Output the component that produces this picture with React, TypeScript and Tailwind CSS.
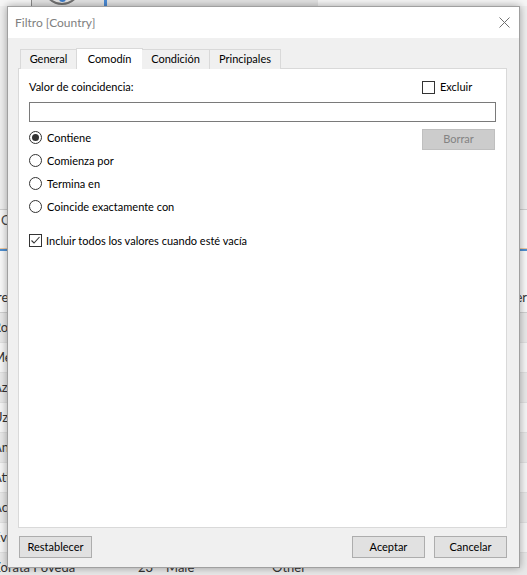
import React from "react";

function Radio({ checked, label }: { checked?: boolean; label: string }) {
  return (
    <div className="flex items-center gap-[5px] h-[13px]">
      <div className="w-[13px] h-[13px] rounded-full border border-[#333333] bg-white flex items-center justify-center">
        {checked && <div className="w-[7px] h-[7px] rounded-full bg-[#333333]" />}
      </div>
      <span className="leading-[13px]">{label}</span>
    </div>
  );
}

function Check({ checked }: { checked?: boolean }) {
  return (
    <div className="w-[13px] h-[13px] border border-[#333333] bg-white flex items-center justify-center">
      {checked && (
        <svg width="11" height="11" viewBox="0 0 11 11">
          <polyline points="1.5,5.5 4,8 9.5,2" fill="none" stroke="#333333" strokeWidth="1.1" />
        </svg>
      )}
    </div>
  );
}

function Btn({ label, disabled }: { label: string; disabled?: boolean }) {
  return (
    <div
      className={
        disabled
          ? "w-[73px] h-[21px] border border-[#bfbfbf] bg-[#cccccc] text-[#838383] flex items-center justify-center"
          : "w-[73px] h-[22px] border border-[#adadad] bg-[#e1e1e1] text-black flex items-center justify-center"
      }
    >
      {label}
    </div>
  );
}

const rows = [
  ["Rosario Ortiz", "31", "Female", "Other"],
  ["Mezquita Pérez", "45", "Male", "Student"],
  ["Azucena Ruiz", "28", "Female", "Other"],
  ["Uzziel Díaz", "52", "Male", "Worker"],
  ["Anabel Martín", "39", "Female", "Other"],
  ["Atilano Prieto", "60", "Male", "Retired"],
  ["Acisclo Nieto", "33", "Male", "Other"],
  ["Evaristo Luna", "41", "Male", "Other"],
  ["Zorata Poveda", "23", "Male", "Other"],
];

export default function App() {
  return (
    <div
      className="relative w-[527px] h-[575px] overflow-hidden bg-[#efefef] text-[11px] text-black"
      style={{ fontFamily: 'Lato, "Noto Sans", sans-serif' }}
    >
      {/* Background application */}
      <div className="flex flex-col">
        <div className="h-[6px] flex bg-[#f6f6f6] overflow-hidden">
          <div className="ml-[31px] w-[287px] h-[6px] border-l border-[#8a8a8a] bg-[#e3e3e3] overflow-hidden">
            <div className="mt-[-34px] h-[40px] flex items-center">
              <div className="ml-[11px] w-[38px] h-[38px] rounded-full border-2 border-[#707070] flex items-end justify-center pb-[1px]">
                <div className="w-[7px] h-[8px] bg-[#3d7cc9] rounded-b-full" />
              </div>
              <div className="ml-[23px] w-[3px] h-[40px] bg-[#4a8ad4]" />
              <span className="ml-[16px] text-[17px] font-semibold leading-[17px] mt-[-26px]">Customers</span>
            </div>
          </div>
        </div>
        <div className="h-[204px] bg-[#efefef] border-b border-[#cfcfcf]" />
        <div className="h-[38px] bg-[#f7f7f7] flex items-start pt-[1px]">
          <span className="ml-[1px] text-[13px] text-[#444]">C</span>
        </div>
        <div className="h-[1px] bg-[#f0c9a0]" />
        <div className="h-[2px] bg-[#4f8fd0]" />
        <div className="h-[32px] bg-[#f9f9f9]" />
        <div className="h-[30px] bg-[#f9f9f9] border-b border-[#d0d0d0] flex items-center text-[13px] text-[#333]">
          <span className="ml-[-38px] w-[182px]">Nombre</span>
          <span className="w-[28px]">Edad</span>
          <span className="w-[106px]">Sexo</span>
          <span className="w-[226px]">Tipo</span>
          <span>Member</span>
        </div>
        {rows.map((r, i) => (
          <div
            key={i}
            className={
              (i % 2 === 0 ? "bg-[#e9e9e9]" : "bg-[#f6f6f6]") +
              " h-[30px] flex items-center text-[13px] text-[#333] border-b border-[#e0e0e0]"
            }
          >
            <span className="ml-[-7px] w-[145px] whitespace-nowrap overflow-hidden">{r[0]}</span>
            <span className="w-[28px]">{r[1]}</span>
            <span className="w-[106px]">{r[2]}</span>
            <span className="w-[230px]">{r[3]}</span>
          </div>
        ))}
      </div>

      {/* Dialog */}
      <div className="absolute left-[7px] top-[6px] w-[513px] h-[562px] border border-[#a0a0a0] bg-[#f0f0f0] shadow-[0_0_8px_rgba(0,0,0,0.35)] flex flex-col">
        <div className="h-[31px] bg-white flex items-center justify-between pl-[7px] pr-[9px]">
          <span className="text-[#808080] text-[12px]">Filtro [Country]</span>
          <svg width="11" height="11" viewBox="0 0 11 11">
            <line x1="0.5" y1="0.5" x2="10.5" y2="10.5" stroke="#6f6f6f" strokeWidth="1" />
            <line x1="10.5" y1="0.5" x2="0.5" y2="10.5" stroke="#6f6f6f" strokeWidth="1" />
          </svg>
        </div>
        <div className="flex-1 flex flex-col pl-[10px] pr-[12px] pt-[10px] pb-[9px]">
          {/* tabs */}
          <div className="flex items-end h-[21px] ml-[2px] relative z-10 -mb-px">
            <div className="w-[57px] h-[20px] border border-b-0 border-[#d9d9d9] bg-[#f0f0f0] flex items-center justify-center">
              General
            </div>
            <div className="w-[67px] h-[21px] border border-b-0 border-[#d9d9d9] bg-white flex items-center justify-center -mx-px">
              Comodín
            </div>
            <div className="w-[68px] h-[20px] border border-b-0 border-l-0 border-[#d9d9d9] bg-[#f0f0f0] flex items-center justify-center">
              Condición
            </div>
            <div className="w-[71px] h-[20px] border border-b-0 border-l-0 border-[#d9d9d9] bg-[#f0f0f0] flex items-center justify-center">
              Principales
            </div>
          </div>
          {/* panel */}
          <div className="flex-1 bg-white border border-[#d9d9d9] flex flex-col pl-[10px] pr-[10px] pt-[12px]">
            <div className="flex items-center justify-between h-[13px]">
              <span>Valor de coincidencia:</span>
              <div className="w-[74px] flex items-center gap-[5px]">
                <Check />
                <span>Excluir</span>
              </div>
            </div>
            <div className="mt-[8px] h-[20px] border border-[#7a7a7a] bg-white" />
            <div className="mt-[7px] flex justify-between items-start">
              <div className="flex flex-col gap-[10px] pt-[2px]">
                <Radio checked label="Contiene" />
                <Radio label="Comienza por" />
                <Radio label="Termina en" />
                <Radio label="Coincide exactamente con" />
              </div>
              <div className="mr-[1px]">
                <Btn label="Borrar" disabled />
              </div>
            </div>
            <div className="mt-[21px] flex items-center gap-[4px]">
              <Check checked />
              <span className="leading-[13px]">Incluir todos los valores cuando esté vacía</span>
            </div>
          </div>
          {/* footer */}
          <div className="mt-[8px] flex items-center justify-between">
            <div className="ml-[1px]">
              <Btn label="Restablecer" />
            </div>
            <div className="flex gap-[9px]">
              <Btn label="Aceptar" />
              <Btn label="Cancelar" />
            </div>
          </div>
        </div>
      </div>
    </div>
  );
}
